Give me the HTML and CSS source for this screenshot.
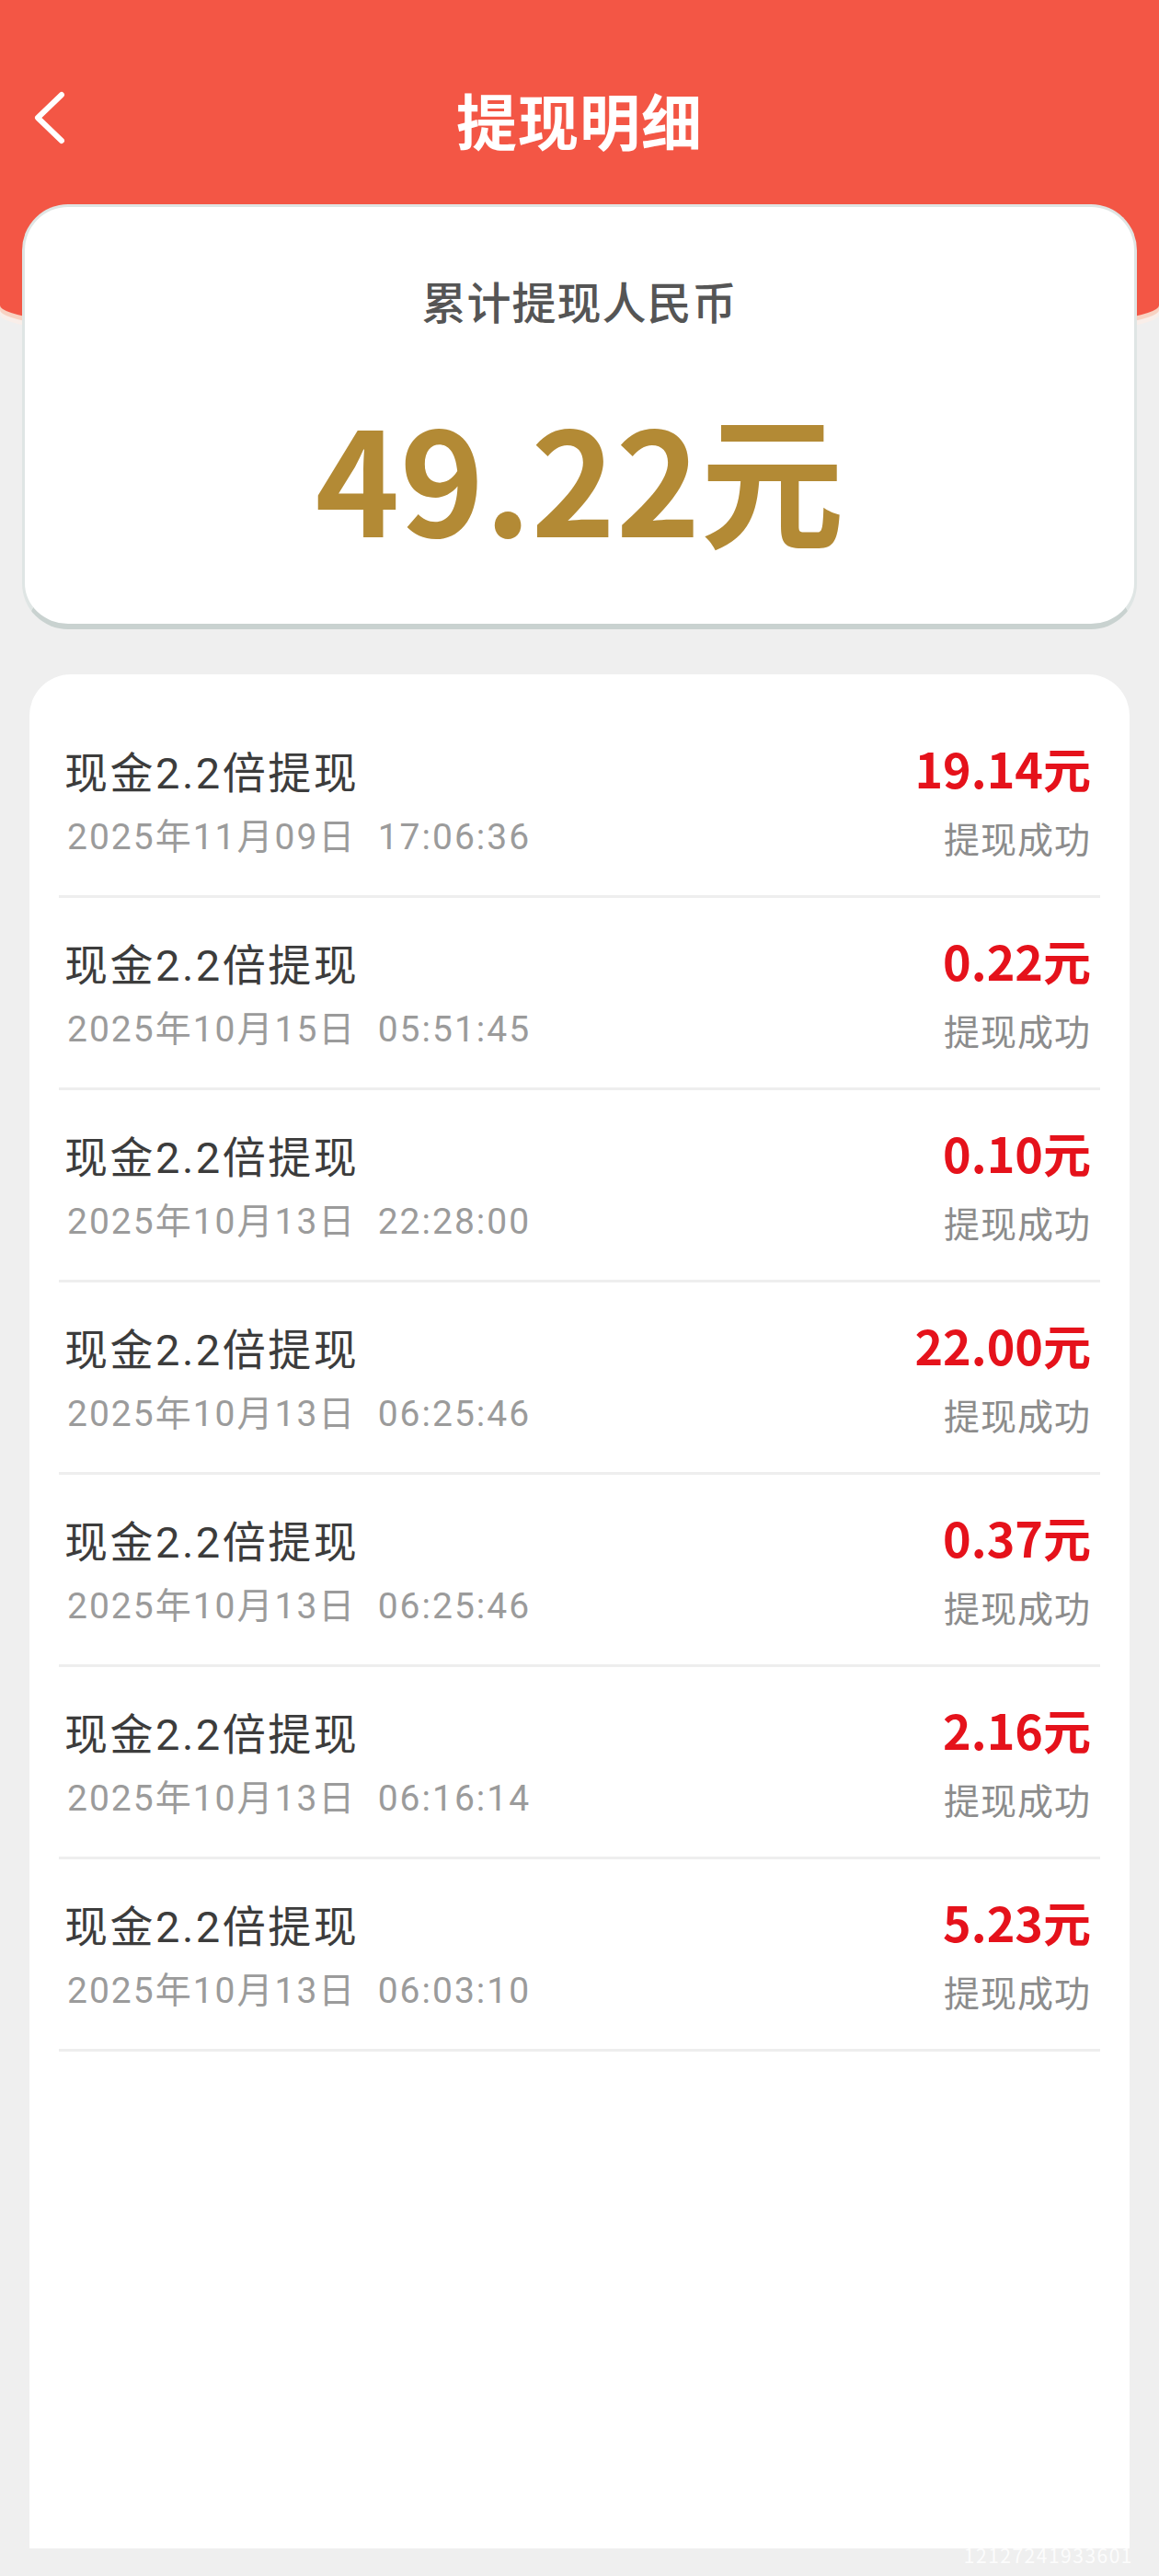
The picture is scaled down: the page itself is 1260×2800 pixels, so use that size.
FILE: index.html
```html
<!DOCTYPE html>
<html lang="zh-CN">
<head>
<meta charset="utf-8">
<title>提现明细</title>
<link rel="stylesheet" href="styles.css">
</head>
<body>
<div class="page">
  <header class="hero">
    <div class="nav">
      <div class="nav-left">
        <svg class="back" viewBox="0 0 36 60" width="36" height="60" aria-hidden="true">
          <path d="M31 4 L5 29 L31 54" fill="none" stroke="#ffffff" stroke-width="6" stroke-linecap="round" stroke-linejoin="round"/>
        </svg>
      </div>
      <h1 class="nav-title">提现明细</h1>
      <div class="nav-right"></div>
    </div>
  </header>

  <section class="summary">
    <div class="summary-label">累计提现人民币</div>
    <div class="summary-amount">49.22元</div>
  </section>

  <section class="list">
    <div class="row">
      <div class="col-left"><div class="title">现金2.2倍提现</div><div class="date">2025年11月09日&nbsp;&nbsp;17:06:36</div></div>
      <div class="col-right"><div class="amt">19.14元</div><div class="status">提现成功</div></div>
    </div>
    <div class="row">
      <div class="col-left"><div class="title">现金2.2倍提现</div><div class="date">2025年10月15日&nbsp;&nbsp;05:51:45</div></div>
      <div class="col-right"><div class="amt">0.22元</div><div class="status">提现成功</div></div>
    </div>
    <div class="row">
      <div class="col-left"><div class="title">现金2.2倍提现</div><div class="date">2025年10月13日&nbsp;&nbsp;22:28:00</div></div>
      <div class="col-right"><div class="amt">0.10元</div><div class="status">提现成功</div></div>
    </div>
    <div class="row">
      <div class="col-left"><div class="title">现金2.2倍提现</div><div class="date">2025年10月13日&nbsp;&nbsp;06:25:46</div></div>
      <div class="col-right"><div class="amt">22.00元</div><div class="status">提现成功</div></div>
    </div>
    <div class="row">
      <div class="col-left"><div class="title">现金2.2倍提现</div><div class="date">2025年10月13日&nbsp;&nbsp;06:25:46</div></div>
      <div class="col-right"><div class="amt">0.37元</div><div class="status">提现成功</div></div>
    </div>
    <div class="row">
      <div class="col-left"><div class="title">现金2.2倍提现</div><div class="date">2025年10月13日&nbsp;&nbsp;06:16:14</div></div>
      <div class="col-right"><div class="amt">2.16元</div><div class="status">提现成功</div></div>
    </div>
    <div class="row">
      <div class="col-left"><div class="title">现金2.2倍提现</div><div class="date">2025年10月13日&nbsp;&nbsp;06:03:10</div></div>
      <div class="col-right"><div class="amt">5.23元</div><div class="status">提现成功</div></div>
    </div>
  </section>

  <div class="watermark">12127241933601</div>
</div>
</body>
</html>
```

FILE: styles.css
```css
html, body {
  margin: 0;
  padding: 0;
}
body {
  background: #efefef;
  font-family: "Noto Sans CJK SC", "Noto Sans", sans-serif;
}
.page {
  position: relative;
  width: 1260px;
  height: 2800px;
  overflow: hidden;
  background: #efefef;
}
.hero {
  height: 373px;
  background: #f35645;
  border-radius: 0 0 50% 50% / 0 0 41px 41px;
  box-shadow: 0 5px 0 #f8d2c2, 0 10px 0 #f9eee9;
}
.nav {
  display: grid;
  grid-template-columns: 1fr auto 1fr;
  align-items: center;
  height: 130px;
  padding-top: 64px;
}
.nav-left {
  display: flex;
  align-items: center;
  padding-left: 36px;
}
.back {
  display: block;
}
.nav-title {
  margin: 0;
  font-size: 66px;
  font-weight: 700;
  color: #ffffff;
  line-height: 80px;
  letter-spacing: 1px;
}
.summary {
  margin: -151px 24px 0;
  height: 462px;
  box-sizing: border-box;
  background: #ffffff;
  border: 3px solid #dfe5e4;
  border-bottom: 6px solid #c9d2d0;
  border-radius: 50px;
  display: flex;
  flex-direction: column;
  align-items: center;
  padding-top: 71px;
}
.summary-label {
  font-size: 48px;
  line-height: 60px;
  font-weight: 500;
  color: #555555;
  letter-spacing: 1px;
}
.summary-amount {
  margin-top: 70px;
  font-size: 156px;
  line-height: 180px;
  font-weight: 700;
  color: #b38a35;
}
.list {
  margin: 49px 32px 0;
  height: 2037px;
  box-sizing: border-box;
  background: #ffffff;
  border-radius: 45px 45px 0 0;
  padding: 34px 32px 0;
}
.row {
  display: flex;
  justify-content: space-between;
  height: 209px;
  box-sizing: border-box;
  padding: 46px 10px 0 6px;
  border-bottom: 3px solid #eeeeee;
}
.title {
  font-family: Roboto, "Noto Sans CJK SC", sans-serif;
  font-size: 47px;
  line-height: 56px;
  color: #3c3c3c;
  letter-spacing: 2.5px;
}
.date {
  font-family: Roboto, "Noto Sans CJK SC", sans-serif;
  margin-top: 17px;
  font-size: 39px;
  line-height: 48px;
  color: #9b9b9b;
  letter-spacing: 2px;
  white-space: nowrap;
  padding-left: 3px;
}
.col-right {
  text-align: right;
}
.amt {
  font-size: 52px;
  line-height: 44px;
  font-weight: 700;
  color: #e5121b;
}
.status {
  margin-top: 29px;
  font-size: 39px;
  line-height: 48px;
  color: #8c8c8c;
  letter-spacing: 1px;
}
.watermark {
  position: absolute;
  right: 28px;
  top: 2766px;
  font-size: 21px;
  line-height: 22px;
  letter-spacing: 1.5px;
  color: rgba(255, 255, 255, 0.85);
}
```
